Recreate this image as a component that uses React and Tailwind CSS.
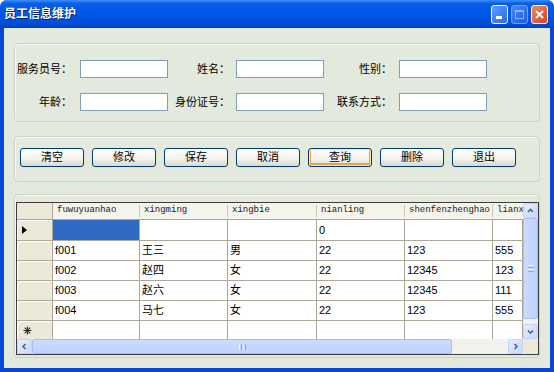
import React from 'react';

const cols = [
    { key: 'fuwuyuanhao', w: 'w-[87px]' },
    { key: 'xingming', w: 'w-[88px]' },
    { key: 'xingbie', w: 'w-[89px]' },
    { key: 'nianling', w: 'w-[88px]' },
    { key: 'shenfenzhenghao', w: 'w-[88px]' },
    { key: 'lianxifangshi', w: 'w-[30px]' },
];

const rows = [
    ['', '', '', '0', '', ''],
    ['f001', '王三', '男', '22', '123', '555'],
    ['f002', '赵四', '女', '22', '12345', '123'],
    ['f003', '赵六', '女', '22', '12345', '111'],
    ['f004', '马七', '女', '22', '123', '555'],
];

const Chevron = ({ dir }) => {
    const d = {
        up: 'M2 6 L4.5 3.5 L7 6',
        down: 'M2 3.5 L4.5 6 L7 3.5',
        left: 'M5.5 2 L3 4.5 L5.5 7',
        right: 'M3.5 2 L6 4.5 L3.5 7',
    }[dir];
    return (
        <svg width="9" height="9" viewBox="0 0 9 9">
            <path d={d} stroke="#4d6185" strokeWidth="1.6" fill="none" />
        </svg>
    );
};

const ScrollBtn = ({ dir }) => (
    <div className="w-[15px] h-[15px] shrink-0 rounded-[2px] border border-[#c3d3fd] bg-[linear-gradient(135deg,#e6eefd_0%,#c6d6fc_100%)] flex items-center justify-center">
        <Chevron dir={dir} />
    </div>
);

const XpButton = ({ children, focused }) => (
    <div className={`w-[64px] h-[19px] rounded-[3px] border border-[#003c74] bg-[linear-gradient(180deg,#ffffff_0%,#f5f4ef_55%,#dcd8cc_100%)] flex items-center justify-center text-[11px] text-black ${focused ? 'shadow-[inset_0_0_0_1px_#ffe7a2,inset_0_-1px_0_2px_#efa33d]' : ''}`}>
        {children}
    </div>
);

const Field = ({ label, lw, gap }) => (
    <>
        <div className={`${lw} text-right text-[11px] text-black`}>{label}</div>
        <div className={`${gap} w-[88px] h-[18px] bg-white border border-[#7f9db9]`} />
    </>
);

const App = () => {
    return (
        <div className="w-[554px] h-[372px] flex flex-col bg-[#0846d6] rounded-t-[7px] overflow-hidden font-['Liberation_Sans','Noto_Sans_CJK_SC',sans-serif]">
            {/* Title bar */}
            <div className="h-[28px] shrink-0 flex items-center justify-between pl-[4px] pr-[6px] bg-[linear-gradient(180deg,#3d8ff8_0%,#0a5fe8_12%,#0056e4_45%,#0050dc_80%,#0040c4_100%)]">
                <span className="text-white font-bold text-[12px] [text-shadow:1px_1px_0_#0a1e6e]">员工信息维护</span>
                <div className="flex gap-[3px] items-center">
                    <div className="w-[17px] h-[19px] rounded-[3px] border border-white bg-[linear-gradient(135deg,#5f9cff_0%,#2a68e8_100%)] flex items-end pl-[4px] pb-[4px]">
                        <div className="w-[6px] h-[3px] bg-white" />
                    </div>
                    <div className="w-[17px] h-[19px] rounded-[3px] border border-[#a8c4f8] bg-[linear-gradient(135deg,#5f9cff_0%,#2a68e8_100%)] flex items-center justify-center opacity-70">
                        <div className="w-[9px] h-[9px] border border-[#c9dafc] border-t-[2px]" />
                    </div>
                    <div className="w-[17px] h-[19px] rounded-[3px] border border-white bg-[linear-gradient(135deg,#f08a5e_0%,#d8421c_100%)] flex items-center justify-center">
                        <svg width="9" height="9" viewBox="0 0 9 9">
                            <path d="M1 1 L8 8 M8 1 L1 8" stroke="white" strokeWidth="1.8" />
                        </svg>
                    </div>
                </div>
            </div>

            {/* Client area */}
            <div className="flex-1 mx-[4px] mb-[4px] bg-[#e3e9dc] px-[10px] pt-[15px] flex flex-col">
                {/* Input group */}
                <div className="h-[79px] rounded-[4px] border border-[#cdd2c4] shadow-[inset_1px_1px_0_#f4f7f0] flex flex-col pt-[16px] gap-[15px]">
                    <div className="flex items-center">
                        <Field label="服务员号：" lw="w-[57px]" gap="ml-[8px]" />
                        <Field label="姓名：" lw="w-[62px]" gap="ml-[6px]" />
                        <Field label="性别：" lw="w-[68px]" gap="ml-[7px]" />
                    </div>
                    <div className="flex items-center">
                        <Field label="年龄：" lw="w-[57px]" gap="ml-[8px]" />
                        <Field label="身份证号：" lw="w-[62px]" gap="ml-[6px]" />
                        <Field label="联系方式：" lw="w-[68px]" gap="ml-[7px]" />
                    </div>
                </div>

                {/* Buttons group */}
                <div className="mt-[14px] h-[46px] rounded-[4px] border border-[#cdd2c4] shadow-[inset_1px_1px_0_#f4f7f0] flex items-start pt-[11px] pl-[5px] gap-[8px]">
                    <XpButton>清空</XpButton>
                    <XpButton>修改</XpButton>
                    <XpButton>保存</XpButton>
                    <XpButton>取消</XpButton>
                    <XpButton focused>查询</XpButton>
                    <XpButton>删除</XpButton>
                    <XpButton>退出</XpButton>
                </div>

                {/* Grid group */}
                <div className="mt-[12px] h-[164px] rounded-[4px] border border-[#cdd2c4] shadow-[inset_1px_1px_0_#f4f7f0] pt-[7px] pl-[1px]">
                    <div className="w-[523px] h-[153px] border border-[#3c3c3c] bg-[#808080] flex flex-col">
                        <div className="flex h-[136px]">
                            <div className="w-[506px] flex flex-col bg-white overflow-hidden">
                                {/* header */}
                                <div className="flex h-[17px] shrink-0 bg-[#f4f3ec]">
                                    <div className="w-[36px] shrink-0 border-r border-b border-[#aca899] bg-[#ece9d8]" />
                                    {cols.map((c) => (
                                        <div key={c.key} className={`${c.w} shrink-0 border-b border-[#aca899] flex items-center justify-between overflow-hidden`}>
                                            <span className="pl-[4px] text-[9px] text-[#222] font-['Liberation_Mono',monospace] whitespace-nowrap">{c.key}</span>
                                            <span className="w-[1px] h-[12px] bg-[#c7c5b2] shrink-0" />
                                        </div>
                                    ))}
                                </div>
                                {rows.map((r, i) => (
                                    <div key={i} className={`flex shrink-0 ${i === 0 ? 'h-[21px]' : 'h-[20px]'}`}>
                                        <div className="w-[36px] shrink-0 border-r border-b border-[#aca899] bg-[#ece9d8] shadow-[inset_1px_1px_0_#ffffff] flex items-center pl-[5px]">
                                            {i === 0 && (
                                                <svg width="5" height="8" viewBox="0 0 5 8">
                                                    <path d="M0 0 L5 4 L0 8 Z" fill="black" />
                                                </svg>
                                            )}
                                        </div>
                                        {r.map((v, j) => (
                                            <div key={j} className={`${cols[j].w} shrink-0 border-r border-b border-[#aca899] flex items-center pl-[2px] text-[11px] text-black whitespace-nowrap overflow-hidden ${i === 0 && j === 0 ? 'bg-[#316ac5]' : ''}`}>
                                                {v}
                                            </div>
                                        ))}
                                    </div>
                                ))}
                                {/* new row */}
                                <div className="flex h-[18px] shrink-0">
                                    <div className="w-[36px] shrink-0 border-r border-[#aca899] bg-[#ece9d8] shadow-[inset_1px_1px_0_#ffffff] flex items-center pl-[6px]">
                                        <svg width="9" height="9" viewBox="0 0 9 9">
                                            <path d="M4.5 0.5 V8.5 M0.5 4.5 H8.5 M1.7 1.7 L7.3 7.3 M7.3 1.7 L1.7 7.3" stroke="#333" strokeWidth="1.2" />
                                        </svg>
                                    </div>
                                    {cols.map((c) => (
                                        <div key={c.key} className={`${c.w} shrink-0 border-r border-[#aca899]`} />
                                    ))}
                                </div>
                            </div>
                            {/* vertical scroll */}
                            <div className="w-[15px] flex flex-col bg-[#f3f1ec]">
                                <ScrollBtn dir="up" />
                                <div className="h-[101px] rounded-[2px] border border-[#a9bff0] bg-[linear-gradient(90deg,#cddcfd_0%,#bfd1fb_100%)] flex flex-col items-center justify-center gap-[1px]">
                                    <span className="w-[6px] h-[1px] bg-[#eef3ff]" />
                                    <span className="w-[6px] h-[1px] bg-[#8fa8e0]" />
                                    <span className="w-[6px] h-[1px] bg-[#eef3ff]" />
                                    <span className="w-[6px] h-[1px] bg-[#8fa8e0]" />
                                </div>
                                <div className="flex-1" />
                                <ScrollBtn dir="down" />
                            </div>
                        </div>
                        {/* horizontal scroll */}
                        <div className="flex h-[15px]">
                            <div className="w-[506px] flex bg-[#f3f1ec]">
                                <ScrollBtn dir="left" />
                                <div className="w-[420px] rounded-[2px] border border-[#a9bff0] bg-[linear-gradient(180deg,#cddcfd_0%,#bfd1fb_100%)] flex items-center justify-center gap-[1px]">
                                    <span className="h-[6px] w-[1px] bg-[#eef3ff]" />
                                    <span className="h-[6px] w-[1px] bg-[#8fa8e0]" />
                                    <span className="h-[6px] w-[1px] bg-[#eef3ff]" />
                                    <span className="h-[6px] w-[1px] bg-[#8fa8e0]" />
                                </div>
                                <div className="flex-1" />
                                <ScrollBtn dir="right" />
                            </div>
                            <div className="w-[15px] bg-[#ece9d8]" />
                        </div>
                    </div>
                </div>
            </div>
        </div>
    );
};

export default App;
